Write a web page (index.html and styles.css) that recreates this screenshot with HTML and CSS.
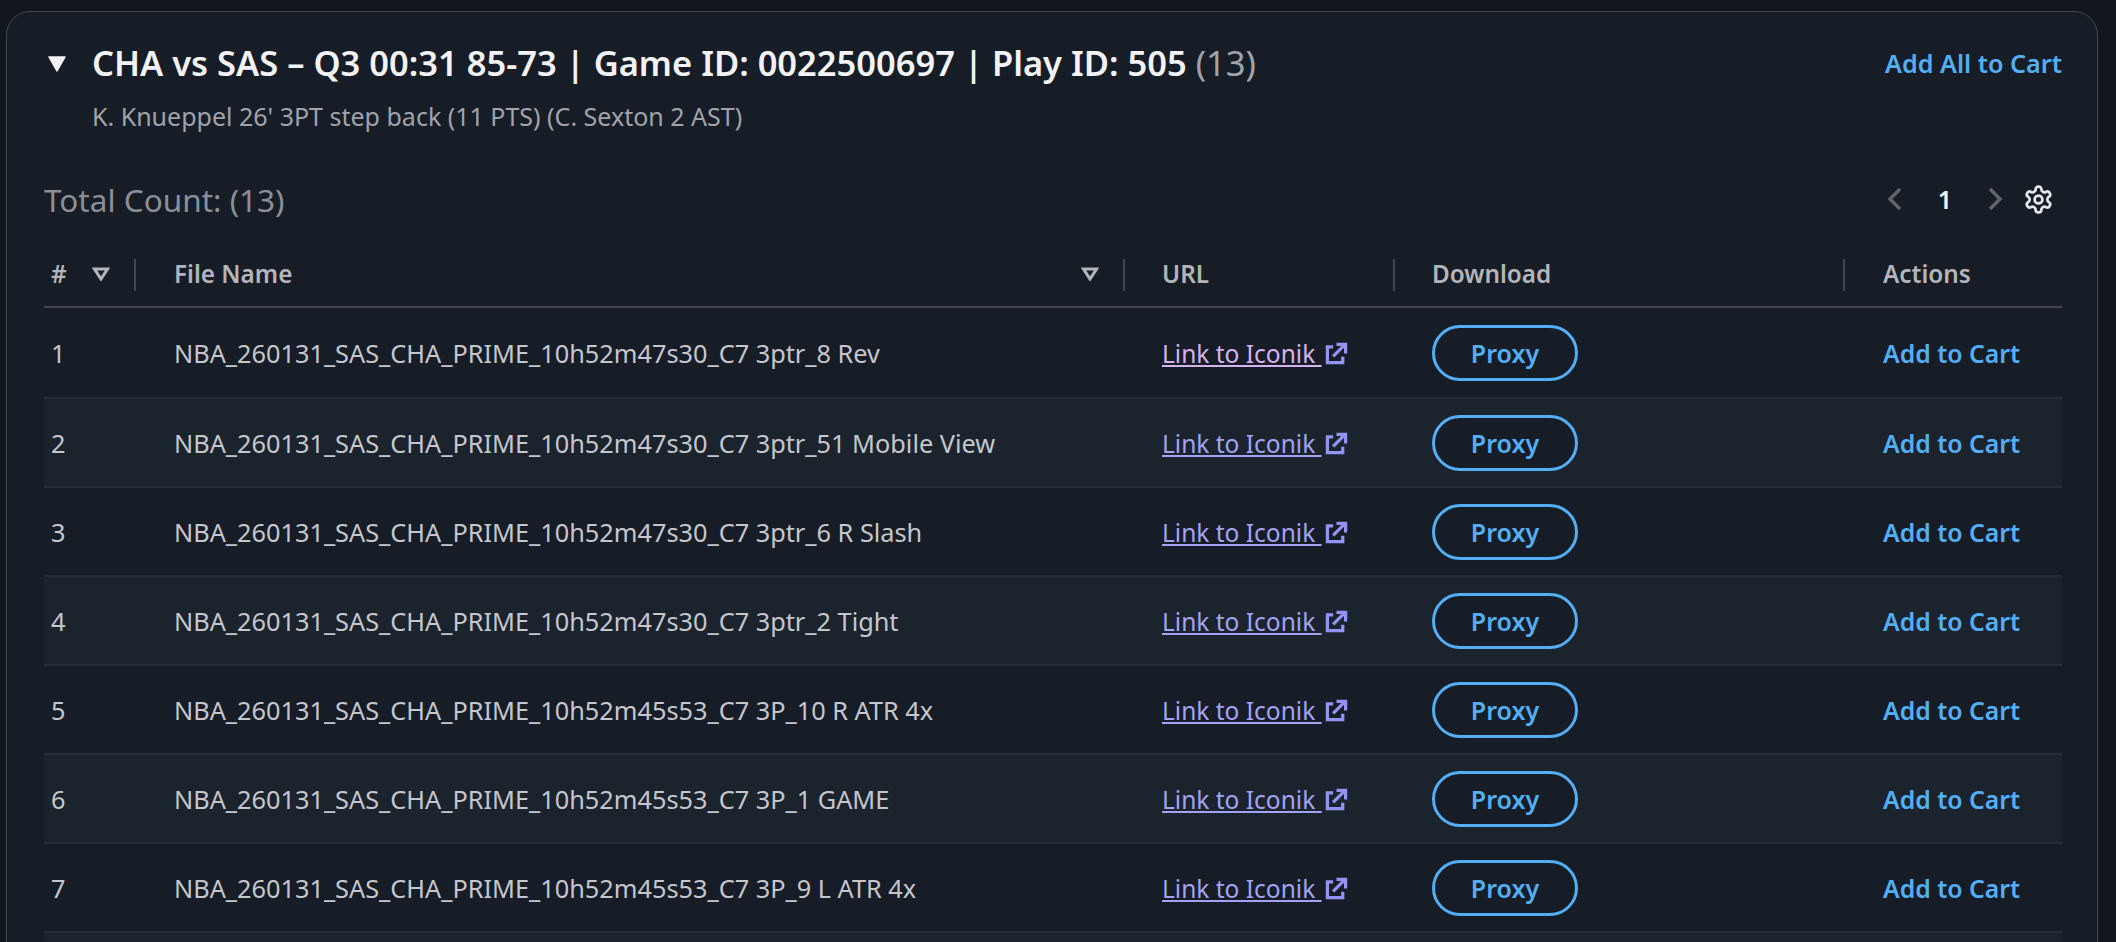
FILE: index.html
```html
<!DOCTYPE html>
<html lang="en">
<head>
    <meta charset="UTF-8">
    <title>Play clips</title>
    <link rel="stylesheet" href="styles.css">
</head>
<body>
    <div class="card">
        <div class="card-head">
            <svg class="caret" viewBox="0 0 20 18"><path d="M2 2h16l-8 14z"/></svg>
            <div class="head-text">
                <h2>CHA vs SAS – Q3 00:31 85-73 | Game ID: 0022500697 | Play ID: 505 <span class="count">(13)</span></h2>
                <p>K. Knueppel 26' 3PT step back (11 PTS) (C. Sexton 2 AST)</p>
            </div>
            <a class="add-all">Add All to Cart</a>
        </div>

        <div class="toolbar">
            <div class="total">Total Count: (13)</div>
            <div class="pager">
                <svg class="chev" viewBox="0 0 16 24"><path d="M13 2 3 12l10 10"/></svg>
                <span class="page">1</span>
                <svg class="chev" viewBox="0 0 16 24"><path d="M3 2l10 10L3 22"/></svg>
                <svg class="gear" viewBox="0 0 24 24"><circle cx="12" cy="12" r="3"/><path d="M12.220 2h-.44a2 2 0 0 0-2 2v.18a2 2 0 0 1-1 1.730l-.43.250a2 2 0 0 1-2 0l-.15-.08a2 2 0 0 0-2.730.730l-.22.380a2 2 0 0 0 .730 2.730l.15.100a2 2 0 0 1 1 1.720v.510a2 2 0 0 1-1 1.740l-.15.090a2 2 0 0 0-.730 2.730l.22.380a2 2 0 0 0 2.730.730l.15-.08a2 2 0 0 1 2 0l.43.250a2 2 0 0 1 1 1.730V20a2 2 0 0 0 2 2h.44a2 2 0 0 0 2-2v-.18a2 2 0 0 1 1-1.730l.43-.25a2 2 0 0 1 2 0l.15.080a2 2 0 0 0 2.730-.730l.22-.39a2 2 0 0 0-.730-2.730l-.15-.08a2 2 0 0 1-1-1.740v-.5a2 2 0 0 1 1-1.740l.15-.09a2 2 0 0 0 .730-2.730l-.22-.38a2 2 0 0 0-2.730-.730l-.15.080a2 2 0 0 1-2 0l-.43-.25a2 2 0 0 1-1-1.730V4a2 2 0 0 0-2-2z"/></svg>
            </div>
        </div>

        <table>
            <thead>
                <tr>
                    <th class="col-num"><span class="th-in">#<svg class="sort" viewBox="0 0 18 14"><path d="M2.500 2h13L9 12z"/></svg></span></th>
                    <th class="col-file"><span class="th-in">File Name<svg class="sort" viewBox="0 0 18 14"><path d="M2.500 2h13L9 12z"/></svg></span></th>
                    <th class="col-url">URL</th>
                    <th class="col-dl">Download</th>
                    <th class="col-act">Actions</th>
                </tr>
            </thead>
            <tbody id="rows"></tbody>
            <tfoot>
                <tr><td colspan="5"></td></tr>
            </tfoot>
        </table>
    </div>

    <script>
        const files = [
            '10h52m47s30_C7 3ptr_8 Rev',
            '10h52m47s30_C7 3ptr_51 Mobile View',
            '10h52m47s30_C7 3ptr_6 R Slash',
            '10h52m47s30_C7 3ptr_2 Tight',
            '10h52m45s53_C7 3P_10 R ATR 4x',
            '10h52m45s53_C7 3P_1 GAME',
            '10h52m45s53_C7 3P_9 L ATR 4x'
        ];
        const rows = document.getElementById('rows');

        files.forEach((name, i) => {
            const row = document.createElement('tr');
            row.innerHTML = `
                <td>${i + 1}</td>
                <td>NBA_260131_SAS_CHA_PRIME_${name}</td>
                <td><a class="iconik${i === 0 ? ' visited' : ''}"><span class="iconik-text">Link to Iconik </span><svg viewBox="0 0 24 24"><path class="box" d="M8.500 5H2.500v16.500H18.500V15.500"/><path class="arrow" d="M8.500 15 21 2.500M12 2.500h9.500V12"/></svg></a></td>
                <td><button class="proxy">Proxy</button></td>
                <td><a class="add">Add to Cart</a></td>
            `;
            rows.appendChild(row);
        });
    </script>
</body>
</html>
```

FILE: styles.css
```css
* {
    box-sizing: border-box;
}

html, body {
    height: 100%;
    overflow: hidden;
}

body {
    margin: 0;
    padding: 11px 18px 0 6px;
    background-color: #12161f;
    font-family: 'Noto Sans', sans-serif;
    color: #c6c6cd;
}

.card {
    height: 1000px;
    padding: 0 35px 0 37px;
    background-color: #161d26;
    border: 1px solid #424650;
    border-radius: 24px;
}

.card-head {
    display: flex;
    align-items: flex-start;
    padding-top: 33px;
}

.caret {
    width: 20px;
    height: 18px;
    margin: 10px 25px 0 3px;
    fill: #f3f3f7;
    stroke: #f3f3f7;
    stroke-width: 1.500;
    stroke-linejoin: round;
}

.head-text {
    flex: 1;
}

h2 {
    margin: 0;
    font-size: 34.500px;
    line-height: 36px;
    font-weight: 600;
    color: #f3f3f7;
}

.count {
    font-weight: 400;
    color: #a1a3ab;
}

.head-text p {
    margin: 21px 0 0;
    font-size: 25px;
    line-height: 28px;
    color: #a1a3ab;
}

.add-all {
    font-size: 25.200px;
    line-height: 36px;
    font-weight: 600;
    color: #54aef5;
}

.toolbar {
    display: flex;
    justify-content: space-between;
    align-items: center;
    height: 44px;
    margin-top: 47px;
}

.total {
    font-size: 31.500px;
    color: #8c8f98;
}

.pager {
    display: flex;
    align-items: center;
    padding-right: 8px;
}

.chev {
    width: 16px;
    height: 24px;
    fill: none;
    stroke: #62646d;
    stroke-width: 3.500;
}

.page {
    width: 84px;
    text-align: center;
    font-size: 25px;
    font-weight: 600;
    color: #f3f3f7;
}

.gear {
    width: 31px;
    height: 31px;
    margin-left: 20px;
    fill: none;
    stroke: #e6e6ea;
    stroke-width: 2.100;
}

table {
    width: 100%;
    table-layout: fixed;
    border-collapse: collapse;
    margin-top: 29px;
}

.col-num { width: 92px; }
.col-file { width: 989px; }
.col-url { width: 270px; }
.col-dl { width: 450px; }

th {
    position: relative;
    height: 57px;
    padding: 0 0 9px 38px;
    text-align: left;
    font-size: 24.300px;
    font-weight: 600;
    color: #b4b5bb;
    border-bottom: 2px solid #424650;
}

th.col-num {
    padding-left: 7px;
}

th.col-url,
th.col-dl {
    padding-left: 37px;
}

th::after {
    content: "";
    position: absolute;
    right: 0;
    top: 9px;
    width: 2px;
    height: 32px;
    background-color: #424650;
}

th.col-act::after {
    display: none;
}

.th-in {
    display: flex;
    justify-content: space-between;
    align-items: center;
    padding-right: 26px;
}

.sort {
    width: 18px;
    height: 14px;
    fill: none;
    stroke: #b4b5bb;
    stroke-width: 3;
}

td {
    height: 89px;
    padding: 0 0 0 38px;
    font-size: 25.300px;
    color: #c6c6cd;
    border-bottom: 2px solid #272d37;
}

tbody tr:first-child td {
    height: 91px;
}

td:first-child {
    padding-left: 7px;
}

td:nth-child(3),
td:nth-child(4) {
    padding-left: 37px;
}

tbody tr:nth-child(even),
tfoot tr {
    background-color: #1b232d;
}

.iconik {
    display: inline-flex;
    align-items: center;
    gap: 3px;
    font-size: 24.500px;
    color: #a3a3f5;
    stroke: #9393f5;
}

.iconik.visited {
    color: #d5b3ee;
}

.iconik-text {
    text-decoration: underline;
    white-space: pre;
}

.iconik svg {
    width: 23px;
    height: 23px;
    fill: none;
    stroke-width: 3.400;
}

.proxy {
    width: 146px;
    height: 56px;
    padding: 0;
    background-color: #161d26;
    border: 3px solid #54aef5;
    border-radius: 28px;
    font-family: inherit;
    font-size: 25px;
    font-weight: 600;
    color: #54aef5;
}

.add {
    font-size: 24.800px;
    font-weight: 600;
    color: #54aef5;
}
```
